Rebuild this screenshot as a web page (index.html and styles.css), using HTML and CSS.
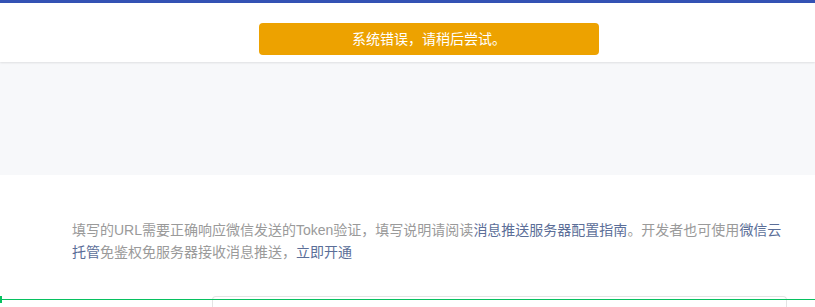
FILE: index.html
```html
<!DOCTYPE html>
<html lang="zh-CN">
<head>
    <meta charset="UTF-8">
    <meta name="viewport" content="width=device-width, initial-scale=1.0">
    <title>服务器配置</title>
    <link rel="stylesheet" href="styles.css">
</head>
<body>
    <div class="topbar"></div>
    <div class="header"></div>

    <div class="toast">系统错误，请稍后尝试。</div>

    <div class="banner"></div>

    <div class="content">
        <p class="tips">
            填写的URL需要正确响应微信发送的Token验证，填写说明请阅读<a href="#">消息推送服务器配置指南</a>。开发者也可使用<a href="#">微信云托管</a>免鉴权免服务器接收消息推送，<a href="#">立即开通</a>
        </p>
        <div class="form-box"></div>
    </div>

    <!-- loading progress -->
    <div class="progress"><span class="progress-head"></span></div>
</body>
</html>
```

FILE: styles.css
```css
body {
    font-family: "Liberation Sans", "Noto Sans CJK SC", sans-serif;
    margin: 0;
    padding: 0;
    background: #fff;
    color: #353535;
    overflow: hidden;
}
.topbar {
    height: 3px;
    background-color: #3452b4;
}
.header {
    height: 59px;
    background-color: #fff;
    box-shadow: 0 1px 2px rgba(0, 0, 0, 0.1);
    position: relative;
    z-index: 1;
}
.toast {
    position: absolute;
    top: 23px;
    left: 259px;
    width: 340px;
    height: 32px;
    line-height: 32px;
    border-radius: 4px;
    background-color: #eda200;
    color: #fff;
    font-size: 14px;
    text-align: center;
    z-index: 10;
}
.banner {
    height: 113px;
    background-color: #f7f8fa;
}
.content {
    padding: 44px 0 0 72px;
}
.tips {
    width: 714px;
    margin: 0;
    font-size: 14px;
    line-height: 22px;
    color: #9a9a9a;
}
.tips a {
    color: #5b6e98;
    text-decoration: none;
}
.form-box {
    margin: 33px 0 0 140px;
    width: 573px;
    height: 10px;
    border: 1px solid #e4e4e4;
    border-bottom: none;
    border-radius: 4px 4px 0 0;
}
.progress {
    position: absolute;
    top: 299px;
    left: 0;
    width: 100%;
    height: 1px;
    background-color: #07c160;
    z-index: 20;
}
.progress-head {
    position: absolute;
    left: 0;
    top: -3px;
    width: 2px;
    height: 7px;
    background-color: #07c160;
}
```
